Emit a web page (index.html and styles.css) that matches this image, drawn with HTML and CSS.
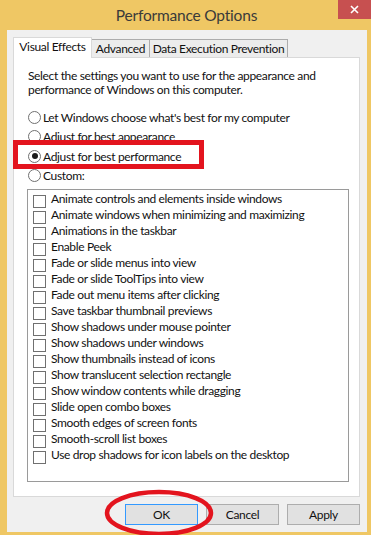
FILE: index.html
```html
<!DOCTYPE html>
<html>
<head>
<meta charset="utf-8">
<title>Performance Options</title>
<link rel="stylesheet" href="styles.css">
</head>
<body>
<div class="screen">
  <header class="titlebar">
    <span class="spacer"></span>
    <h1 class="title">Performance Options</h1>
    <div class="close-wrap">
      <button class="close" aria-label="Close">
        <svg width="9" height="9" viewBox="0 0 9 9"><path d="M1 1 L8 8 M8 1 L1 8" stroke="#fff" stroke-width="1.6"/></svg>
      </button>
    </div>
  </header>
  <div class="window">
    <div class="tabs">
      <div class="tab active">Visual Effects</div>
      <div class="tab">Advanced</div>
      <div class="tab">Data Execution Prevention</div>
    </div>
    <div class="panel">
      <p class="intro">Select the settings you want to use for the appearance and<br>performance of Windows on this computer.</p>
      <div class="radios">
        <label class="radio"><span class="dot"></span>Let Windows choose what's best for my computer</label>
        <label class="radio"><span class="dot"></span>Adjust for best appearance</label>
        <label class="radio"><span class="dot on"></span>Adjust for best performance</label>
        <label class="radio"><span class="dot"></span>Custom:</label>
      </div>
      <div class="listbox">
        <div class="item"><span class="box"></span><span class="lbl">Animate controls and elements inside windows</span></div>
        <div class="item"><span class="box"></span><span class="lbl">Animate windows when minimizing and maximizing</span></div>
        <div class="item"><span class="box"></span><span class="lbl">Animations in the taskbar</span></div>
        <div class="item"><span class="box"></span><span class="lbl">Enable Peek</span></div>
        <div class="item"><span class="box"></span><span class="lbl">Fade or slide menus into view</span></div>
        <div class="item"><span class="box"></span><span class="lbl">Fade or slide ToolTips into view</span></div>
        <div class="item"><span class="box"></span><span class="lbl">Fade out menu items after clicking</span></div>
        <div class="item"><span class="box"></span><span class="lbl">Save taskbar thumbnail previews</span></div>
        <div class="item"><span class="box"></span><span class="lbl">Show shadows under mouse pointer</span></div>
        <div class="item"><span class="box"></span><span class="lbl">Show shadows under windows</span></div>
        <div class="item"><span class="box"></span><span class="lbl">Show thumbnails instead of icons</span></div>
        <div class="item"><span class="box"></span><span class="lbl">Show translucent selection rectangle</span></div>
        <div class="item"><span class="box"></span><span class="lbl">Show window contents while dragging</span></div>
        <div class="item"><span class="box"></span><span class="lbl">Slide open combo boxes</span></div>
        <div class="item"><span class="box"></span><span class="lbl">Smooth edges of screen fonts</span></div>
        <div class="item"><span class="box"></span><span class="lbl">Smooth-scroll list boxes</span></div>
        <div class="item"><span class="box"></span><span class="lbl">Use drop shadows for icon labels on the desktop</span></div>
      </div>
    </div>
    <div class="buttons">
      <button class="btn focus">OK</button>
      <button class="btn">Cancel</button>
      <button class="btn">Apply</button>
    </div>
  </div>
  <div class="mark-rect"></div>
  <svg class="mark-ellipse" width="120" height="50" viewBox="0 0 120 50">
    <ellipse cx="56" cy="24" rx="52" ry="21" fill="none" stroke="#e3141e" stroke-width="4.5"/>
  </svg>
</div>
</body>
</html>
```

FILE: styles.css
```css
* { box-sizing: border-box; }
html, body { margin: 0; padding: 0; }
body {
  width: 371px;
  height: 535px;
  overflow: hidden;
  background: #efc764;
  font-family: Lato, "Liberation Sans", sans-serif;
  font-size: 12px;
  letter-spacing: -0.35px;
  color: #111;
}
.screen {
  position: relative;
  width: 371px;
  height: 535px;
  display: flex;
  flex-direction: column;
}
.titlebar {
  height: 30px;
  display: grid;
  grid-template-columns: 1fr auto 1fr;
}
.title {
  margin: 0;
  font-weight: normal;
  font-size: 15.5px;
  letter-spacing: -0.2px;
  line-height: 30px;
  color: #3a3a3a;
  padding-left: 2px;
}
.close-wrap {
  display: flex;
  justify-content: flex-end;
  align-items: flex-start;
}
.close {
  width: 33px;
  height: 19px;
  border: 0;
  padding: 0;
  background: #c75050;
  display: flex;
  align-items: center;
  justify-content: center;
}
.window {
  margin-left: 7px;
  width: 360px;
  height: 502px;
  background: #f0f0f0;
  display: flex;
  flex-direction: column;
}
.tabs {
  margin-top: 7px;
  padding-left: 6px;
  display: flex;
  align-items: flex-end;
  height: 20px;
}
.tab {
  height: 18px;
  padding: 0;
  border: 1px solid #acacac;
  border-bottom: 0;
  background: #ececec;
  line-height: 17px;
  margin-left: -1px;
  white-space: nowrap;
  text-align: center;
}
.tab.active {
  width: 79px;
  height: 21px;
  margin-bottom: -1px;
  margin-left: 0;
  background: #fff;
  border-color: #d9d9d9;
  position: relative;
  z-index: 1;
  line-height: 17px;
}
.tab:nth-child(2) { width: 59px; }
.tab:nth-child(3) { width: 139px; }
.panel {
  margin-left: 6px;
  width: 347px;
  height: 440px;
  background: #fff;
  border: 1px solid #d9d9d9;
  padding: 11px 0 0 13px;
  display: flex;
  flex-direction: column;
}
.intro {
  margin: 0 0 11px 1px;
  line-height: 14px;
}
.radios {
  display: flex;
  flex-direction: column;
  margin-left: 1px;
}
.radio {
  height: 19.3px;
  display: flex;
  align-items: center;
  gap: 2px;
}
.dot {
  width: 13px;
  height: 13px;
  border: 1px solid #707070;
  border-radius: 50%;
  background: #fff;
  display: flex;
  align-items: center;
  justify-content: center;
}
.dot.on::after {
  content: "";
  width: 6px;
  height: 6px;
  border-radius: 50%;
  background: #1a1a1a;
}
.listbox {
  margin-top: 4px;
  width: 322px;
  height: 293px;
  border: 1px solid #9a9a9a;
  padding: 3px 0 0 5px;
}
.item {
  height: 16px;
  display: flex;
  align-items: center;
  gap: 5px;
  white-space: nowrap;
}
.lbl {
  padding-bottom: 4px;
  line-height: 14px;
}
.box {
  width: 13px;
  height: 13px;
  border: 1px solid #707070;
  background: #fff;
  flex: none;
}
.buttons {
  margin-top: 7px;
  padding-right: 7px;
  display: flex;
  justify-content: flex-end;
  gap: 8px;
}
.btn {
  width: 73px;
  height: 21px;
  border: 1px solid #adadad;
  background: #e1e1e1;
  font-family: inherit;
  font-size: 12px;
  letter-spacing: inherit;
  color: #111;
  padding: 0;
}
.btn.focus {
  border-color: #3399ff;
}
.mark-rect {
  position: absolute;
  left: 13px;
  top: 140px;
  width: 191px;
  height: 29px;
  border: 5px solid #e3141e;
}
.mark-ellipse {
  position: absolute;
  left: 103px;
  top: 489px;
}
```
